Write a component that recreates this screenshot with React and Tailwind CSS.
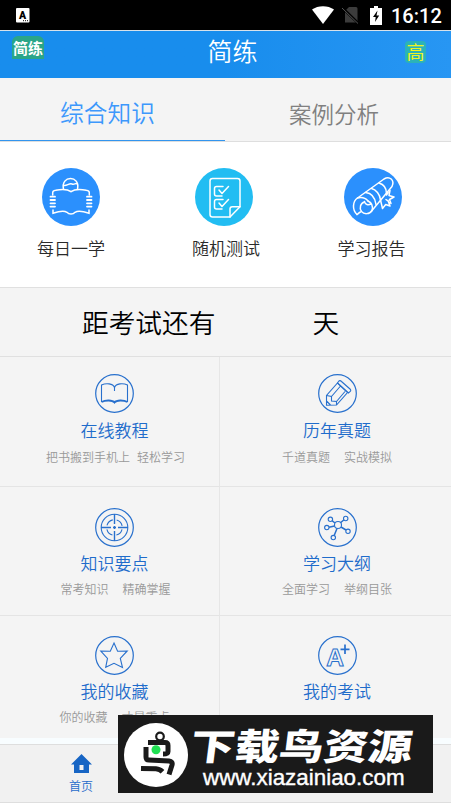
import React, { useState } from 'react';

const BookReader = () => (
  <svg viewBox="0 0 58 58" className="w-[58px] h-[58px]" fill="none" stroke="white" strokeWidth="1.5" strokeLinecap="round">
    <circle cx="29" cy="29" r="29" fill="#2b90fd" stroke="none" />
    <path d="M21.500 21C18.500 7 38.500 7 35.500 21" />
    <path d="M22 17.500c3 .5 5-2.500 8-1.500s3-1.500 5.500 0" />
    <path d="M10.700 27v-2.500c0-1.500 1-2 3-2.300 6-1.200 12-1 15.300 1.500 3.300-2.500 9.300-2.700 15.300-1.500 2 .3 3 .8 3 2.300V27" />
    <path d="M11 42v3.300c6-2 11-2.800 14-1 1.800 2.400 6.200 2.400 8 0 3-1.800 8-1 14 1V42" />
    <path d="M8.500 28.700h4.500M8.500 32h4.500M8.500 35.300h4.500M8.500 38.600h4.500M45 28.700h4.500M45 32h4.500M45 35.300h4.500M45 38.600h4.500" strokeWidth="1.800" />
  </svg>
);

const CheckSheet = () => (
  <svg viewBox="0 0 58 58" className="w-[58px] h-[58px]" fill="none" stroke="white" strokeWidth="1.500" strokeLinecap="round" strokeLinejoin="round">
    <circle cx="29" cy="29" r="29" fill="#22bdf2" stroke="none" />
    <path d="M45 38.700V13a2.500 2.500 0 0 0-2.500-2.500h-25A2.500 2.500 0 0 0 15 13v33.500a2.500 2.500 0 0 0 2.500 2.500H35z" />
    <path d="M35 49v-8a2.300 2.300 0 0 1 2.300-2.300H45" />
    <path d="M28 18.500h-6.500a2 2 0 0 0-2 2v5.500a2 2 0 0 0 2 2h5.500M24 22l3 3.500 6.500-7" />
    <path d="M28 31.500h-6.500a2 2 0 0 0-2 2V39a2 2 0 0 0 2 2h5.500M24 35l3 3.500 6.500-7" />
  </svg>
);

const Diploma = () => (
  <svg viewBox="0 0 58 58" className="w-[58px] h-[58px]" fill="none" stroke="white" strokeWidth="1.500" strokeLinecap="round" strokeLinejoin="round">
    <circle cx="29" cy="29" r="29" fill="#2b90fd" stroke="none" />
    <path d="M13 46.500C8 42 8.500 33.500 13.500 30L40 11c5.500-3.500 11 1 8 7.500L28 42.500" />
    <path d="M13 46.500c1.500-1 2-2 3.500-2.500M13.500 30c4-1 8 0 10.500 3M28 42.500c-2.500 4-8 4-10.500 1-2.500-3.500-1-8.500 3-9.500" />
    <path d="M20.500 33.500c.5 3 4 4.500 6.500 2M24 33c4 2 5 6 4 9.500" />
    <path d="M21.500 24.500c5.500.5 9.500 4.500 10.500 12M27.500 20.500c4.500 1 8.500 6 9 11.500M35 15c5 1.500 7.500 6 7.500 10.500" />
    <path d="M36.500 32l2 8.500 3.200-4 4.300 1.500-2-5.500M44 24.500l-1.500 2.500M46 22.500l-1 5 5 1.500-4.500 2.500 1.500 4-5-4" />
  </svg>
);

const RingIcon = ({ children }) => (
  <svg viewBox="0 0 39 39" className="w-[39px] h-[39px]" fill="none" stroke="#2870cd" strokeWidth="1.100">
    <circle cx="19.500" cy="19.500" r="18.800" strokeWidth="1.200" />
    {children}
  </svg>
);

const OpenBook = () => (
  <RingIcon>
    <path d="M19.500 17v-3.500C18 9.300 11 8.800 6.500 11v17M19.500 13.500C21 9.300 28 8.800 32.500 11v17" />
    <path d="M6.500 28c4-2 11-2 13 .5 2-2.500 9-2.500 13-.5" strokeWidth="1.900" />
  </RingIcon>
);

const Pencil = () => (
  <RingIcon>
    <path d="M8.500 31.300V21.500L19.500 9l10 9.500L18.500 31zM8.500 21.500l5 1v4.500l5 .5v3.500M8.500 27l4 4M13.500 22.500L22.500 12M18.500 27.500l8.500-10" />
    <path d="M19.500 9l1-1.500c1-1.300 2-1 3 0l8.500 7.500c1 1 1 1.800 0 2.700l-1.500 1.300z" />
  </RingIcon>
);

const Target = () => (
  <RingIcon>
    <circle cx="19.500" cy="19.500" r="13.300" />
    <circle cx="19.500" cy="19.500" r="7.800" strokeDasharray="8.250 4" strokeDashoffset="-2" />
    <path d="M19.500 6v10M19.500 23v10M6 19.500h10M23 19.500h10M18 19.500h3M19.500 18v3" strokeWidth="1.400" />
  </RingIcon>
);

const Network = () => (
  <RingIcon>
    <path d="M17 15l-3-2.300M22.500 14.700l3.500-3M23 19l5 3M19 20.500l-2.800 7M16.500 18l-5.500 1.300" strokeWidth="1.500" />
    <circle cx="20" cy="17" r="3.500" />
    <circle cx="12.400" cy="11.300" r="2.200" />
    <circle cx="27.700" cy="10.500" r="2.200" />
    <circle cx="30" cy="23.300" r="2.200" />
    <circle cx="15.300" cy="29.600" r="2.200" />
    <circle cx="8.800" cy="19.600" r="2.200" />
  </RingIcon>
);

const Star = () => (
  <RingIcon>
    <path d="M19 7l3.600 8.300 9.600-.3-6.900 7.300 2.200 9.200-8.500-4.200-8.300 4 1.800-9-6.700-7.300 9.500.3z" />
  </RingIcon>
);

const GradeA = () => (
  <RingIcon>
    <text x="8.300" y="29.700" fontSize="24.500" fontWeight="700" fontFamily="Liberation Sans, sans-serif" strokeWidth="1">A</text>
    <path d="M27 8.500v9.500M22.500 13.300h9" strokeWidth="1.700" />
  </RingIcon>
);

const shortcuts = [
  { title: '每日一学', icon: <BookReader />, cell: 'w-[142px]', shift: 'pl-0' },
  { title: '随机测试', icon: <CheckSheet />, cell: 'w-[164px]', shift: 'pl-1' },
  { title: '学习报告', icon: <Diploma />, cell: 'w-[133px]', shift: 'pr-0.5' },
];

const modules = [
  { title: '在线教程', desc: ['把书搬到手机上', '轻松学习'], gap: 'gap-[7px]', icon: <OpenBook /> },
  { title: '历年真题', desc: ['千道真题', '实战模拟'], gap: 'gap-3.5', icon: <Pencil /> },
  { title: '知识要点', desc: ['常考知识', '精确掌握'], gap: 'gap-3.5', icon: <Target /> },
  { title: '学习大纲', desc: ['全面学习', '举纲目张'], gap: 'gap-3.5', icon: <Network /> },
  { title: '我的收藏', desc: ['你的收藏', '才是重点'], gap: 'gap-3.5', icon: <Star /> },
  { title: '我的考试', desc: [], gap: 'gap-3.5', icon: <GradeA /> },
];

const StatusBar = () => (
  <div className="h-[30px] bg-black flex items-center pl-4 pr-[9px] text-white">
    <svg viewBox="0 0 14 15" className="w-3.5 h-[15px]">
      <rect width="13.500" height="14.500" rx="1" fill="white" />
      <text x="3" y="10.500" fontSize="10.500" fontWeight="900" fontFamily="Roboto, sans-serif" fill="black">A</text>
      <path d="M7 12.700h1M9 12.700h1M11 12.700h1" stroke="black" />
    </svg>
    <div className="ml-auto flex items-center">
      <svg viewBox="0 0 22 18" className="w-[22px] h-[18px]">
        <path d="M0 3.500C6-1 16-1 22 3.500L11 18z" fill="white" />
      </svg>
      <svg viewBox="0 0 17 18" className="w-[17px] h-[18px] ml-2">
        <path d="M7 1h7a1.500 1.500 0 0 1 1.500 1.500v14H3V5z" fill="#3c3c3c" />
        <path d="M0 1.500l16 15.500" stroke="black" strokeWidth="2.500" />
        <path d="M0 2l16 15.500" stroke="#555" />
      </svg>
      <svg viewBox="0 0 12 19" className="w-3 h-[19px] ml-[11px]">
        <path d="M4 0h4v2h4v17H0V2h4z" fill="white" />
        <path d="M7.500 4.500L3 11h2.700L5 16l4.200-6.500H6.500z" fill="black" />
      </svg>
      <span className="ml-[9px] w-[51px] pt-px font-[Roboto,sans-serif] font-medium text-[20px] leading-[30px]">16:12</span>
    </div>
  </div>
);

const Watermark = () => (
  <div className="absolute left-[118px] top-[715px] w-[315px] h-[78px] bg-[#1a1a1a] flex items-center pl-1.5 overflow-hidden">
    <svg viewBox="0 0 64 64" className="w-16 h-16 shrink-0 mt-0.5">
      <circle cx="32" cy="32" r="32" fill="white" />
      <g fill="none" stroke="#1a1a1a" strokeWidth="5">
        <circle cx="36" cy="13.500" r="3.800" strokeWidth="2.200" />
        <path d="M24 19.500h17q3 0 3 3v6q0 2.500-5 2.500M22 24v10q0 3 3 3l20 1q4 .5 3 4l-3 9.500M17 45.500l15 .3q4 .3 6.500 3" />
      </g>
      <circle cx="32" cy="26.700" r="4.500" fill="#20e052" />
    </svg>
    <div className="flex flex-col items-start text-white">
      <span className="ml-[3px] mt-1.5 h-[40px] text-[36.500px] leading-[40px] font-black whitespace-nowrap origin-left scale-x-[1.215] -skew-x-6">下载鸟资源</span>
      <span className="ml-[15px] h-[25px] font-['Liberation_Sans',sans-serif] text-[22.400px] leading-[25px] [-webkit-text-stroke:0.4px_white]">www.xiazainiao.com</span>
    </div>
  </div>
);

const App = () => {
  const [tab, setTab] = useState('综合知识');

  return (
    <div className="relative w-[451px] h-[803px] overflow-hidden bg-[#f4f4f4] font-['Noto_Sans_CJK_SC',sans-serif] font-[350]">
      <StatusBar />

      <header className="h-12 border-t border-[#d8e2ea] bg-linear-to-r from-[#188ded] from-50% to-[#2796f3] flex items-start justify-between pl-3 pr-[25px] text-white">
        <span className="mt-[5px] w-8 h-[23px] rounded-t-md bg-[#2aa588] text-center text-[15px] leading-[23px] font-bold">简练</span>
        <h1 className="ml-4 text-[25px] leading-[39px] font-[350]">简练</h1>
        <span className="mt-2.5 w-[21px] h-[22px] rounded bg-[#2bb3b8] text-center text-[18px] leading-[21px] text-[#f0f321] font-normal">高</span>
      </header>

      <nav className="flex h-16 text-[23.700px] leading-[70px] border-b border-[#dedede]">
        {['综合知识', '案例分析'].map((item) => (
          <button
            key={item}
            onClick={() => setTab(item)}
            className={`h-[63px] ${item === '综合知识' ? 'w-[225px] pr-2.5' : 'w-[226px] pr-2 text-[22.500px]'} ${tab === item ? 'text-[#3d98fc] border-b border-[#3395ee]' : 'text-[#808080]'} flex items-center justify-center`}
          >
            <span className="leading-[70px] mt-1.5">{item}</span>
          </button>
        ))}
      </nav>

      <section className="h-[145px] bg-white flex pt-[26px]">
        {shortcuts.map((item) => (
          <div key={item.title} className={`flex flex-col items-center ${item.cell}`}>
            {item.icon}
            <span className={`mt-2.5 text-[17px] leading-6 text-[#2a2a2a] whitespace-nowrap ${item.shift}`}>{item.title}</span>
          </div>
        ))}
      </section>

      <section className="h-[70px] border-y border-[#e0e0e0] flex items-center pl-[82px] pb-px text-[26.700px] leading-[40px] text-black">
        <span>距考试还有</span>
        <span className="ml-[97px]">天</span>
      </section>

      <section className="grid grid-cols-[220px_231px] grid-rows-[130px_129px_122px]">
        {modules.map((item, index) => (
          <div
            key={item.title}
            className={`flex flex-col items-center ${index < 4 ? 'border-b border-b-[#e4e4e4]' : ''} ${index % 2 === 0 ? 'border-r border-r-[#e6e6e6] pl-2.5' : 'pl-[3px]'} ${index === 2 || index === 3 ? 'pt-[21px]' : index > 3 ? 'pt-5' : 'pt-[17px]'}`}
          >
            {item.icon}
            <h2 className={`text-[17px] leading-6 text-[#1f6ccb] ${index < 2 ? 'mt-[5px]' : 'mt-1'}`}>{item.title}</h2>
            <p className={`flex text-[12px] leading-5 text-[#999] ${index < 2 ? 'mt-[5px]' : 'mt-1'} ${index === 0 || index === 2 ? 'pl-0.5' : ''} ${item.gap}`}>
              {item.desc.map((text) => (
                <span key={text}>{text}</span>
              ))}
            </p>
          </div>
        ))}
      </section>

      <footer className="border-t-[6px] border-[#f8fdff] h-[65px]">
        <div className="h-[59px] border-y border-[#dedede] bg-[#f1f1f1] flex flex-col items-center w-full pr-[289px] pt-[9px]">
          <svg viewBox="0 0 21 19" className="w-[21px] h-[19px]">
            <path d="M10.500 0L0 10.500h3V19h15v-8.500h3zM8.500 11h4v5h-4z" fill="#1765c4" fillRule="evenodd" />
          </svg>
          <span className="mt-1 text-[12px] leading-[18px] text-[#1f6ccb]">首页</span>
        </div>
      </footer>

      <Watermark />
    </div>
  );
};

export default App;
